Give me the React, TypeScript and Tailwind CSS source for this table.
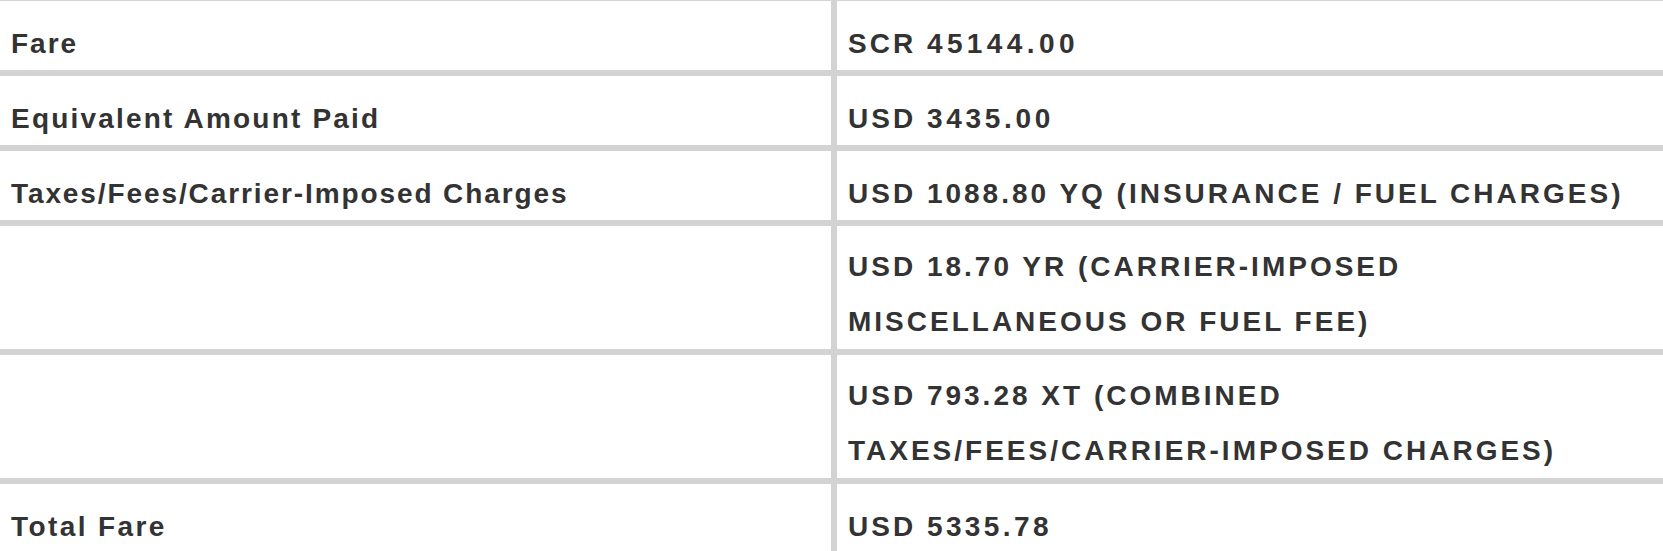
import React from "react";

const rows: { label: string; lt: string; value: React.ReactNode; multi?: boolean }[] = [
  {
    label: "Fare",
    lt: "tracking-[2px]",
    value: (
      <>
        SCR <span className="tracking-[4.4px]">45144.00</span>
      </>
    ),
  },
  {
    label: "Equivalent Amount Paid",
    lt: "tracking-[2.2px]",
    value: (
      <>
        USD <span className="tracking-[3.7px]">3435.00</span>
      </>
    ),
  },
  {
    label: "Taxes/Fees/Carrier-Imposed Charges",
    lt: "tracking-[1.9px]",
    value: "USD 1088.80 YQ (INSURANCE / FUEL CHARGES)",
  },
  {
    label: "",
    lt: "",
    multi: true,
    value: (
      <>
        USD 18.70 YR (CARRIER-IMPOSED
        <br />
        MISCELLANEOUS OR FUEL FEE)
      </>
    ),
  },
  {
    label: "",
    lt: "",
    multi: true,
    value: (
      <>
        USD 793.28 XT (COMBINED
        <br />
        TAXES/FEES/CARRIER-IMPOSED CHARGES)
      </>
    ),
  },
  {
    label: "Total Fare",
    lt: "tracking-[2.4px]",
    value: (
      <>
        USD <span className="tracking-[3.4px]">5335.78</span>
      </>
    ),
  },
];

export default function App() {
  return (
    <div
      className="w-[1663px] h-[551px] overflow-hidden bg-white text-[#333333]"
      style={{ fontFamily: '"Liberation Sans", Arial, sans-serif' }}
    >
      <div className="border-t border-[#d3d3d3]">
        {rows.map((r, i) => {
          const cell = r.multi ? "pt-[13px] leading-[55px]" : "pt-[17px] leading-[52px]";
          return (
            <div key={i} className="flex border-b-[6px] border-[#d3d3d3] text-[28px] font-bold">
              <div className={`w-[837px] shrink-0 border-r-[6px] border-[#d3d3d3] pl-[11px] ${r.lt} ${cell}`}>
                {r.label}
              </div>
              <div className={`flex-1 pl-[11px] pr-[10px] tracking-[3px] whitespace-nowrap ${cell}`}>
                {r.value}
              </div>
            </div>
          );
        })}
      </div>
    </div>
  );
}
